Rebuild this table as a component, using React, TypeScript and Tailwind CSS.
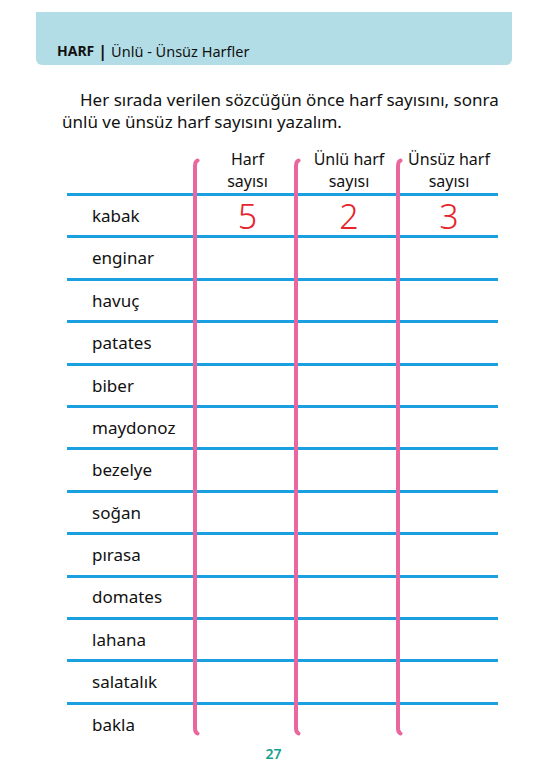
import React from "react";

const words = [
  "kabak",
  "enginar",
  "havuç",
  "patates",
  "biber",
  "maydonoz",
  "bezelye",
  "soğan",
  "pırasa",
  "domates",
  "lahana",
  "salatalık",
  "bakla",
];

// pink column rule, drawn like a marker stroke with slightly curled ends
const PinkRule = ({ className = "" }: { className?: string }) => (
  <svg
    viewBox="0 0 12 578"
    width="12"
    height="578"
    className={className}
    fill="none"
    stroke="#e9669f"
    strokeWidth="4"
    strokeLinecap="round"
  >
    <path d="M6.5 2.5 Q4 3.5 4 8 L4 570 Q4 574.5 6.5 575.5" />
  </svg>
);

export default function App() {
  return (
    <div
      className="w-[553px] h-[780px] bg-white text-[#111] flex flex-col"
      style={{ fontFamily: '"Noto Sans", "Open Sans", sans-serif' }}
    >
      {/* header band */}
      <div className="ml-[36px] mt-[12px] w-[476px] h-[53px] bg-[#b3dde6] rounded-b-[6px] flex items-end pl-[21px] pb-[5px] text-[14px] leading-[18px]">
        <span className="font-bold">HARF</span>
        <span className="font-bold mx-[4px] text-[16px]">|</span>
        <span className="text-[14.5px]">Ünlü - Ünsüz Harfler</span>
      </div>

      {/* instruction */}
      <p className="mt-[24px] pl-[62px] pr-[50px] text-[17px] leading-[22px] indent-[18px]">
        Her sırada verilen sözcüğün önce harf sayısını, sonra ünlü ve ünsüz harf sayısını yazalım.
      </p>

      {/* table */}
      <div className="relative ml-[67px] mt-[15px] w-[431px]">
        <div className="grid grid-cols-[130px_101px_102px_98px] h-[45px] text-[16px] leading-[22px] text-center">
          <div />
          <div className="flex flex-col justify-end pb-[1px]">
            <span>Harf</span>
            <span>sayısı</span>
          </div>
          <div className="flex flex-col justify-end pb-[1px]">
            <span>Ünlü harf</span>
            <span>sayısı</span>
          </div>
          <div className="flex flex-col justify-end pb-[1px]">
            <span>Ünsüz harf</span>
            <span>sayısı</span>
          </div>
        </div>

        {words.map((w, i) => (
          <div
            key={w}
            className="grid grid-cols-[130px_101px_102px_98px] h-[42.4px] border-t-[3px] border-[#1aa0e0] items-center"
          >
            <span className="pl-[25px] text-[17px]">{w}</span>
            {i === 0 ? (
              <>
                <span className="text-center text-[34px] leading-[36px] font-light text-[#e5242c]">5</span>
                <span className="text-center text-[34px] leading-[36px] font-light text-[#e5242c]">2</span>
                <span className="text-center text-[34px] leading-[36px] font-light text-[#e5242c]">3</span>
              </>
            ) : (
              <>
                <span />
                <span />
                <span />
              </>
            )}
          </div>
        ))}

        {/* pink column rules over the grid */}
        <PinkRule className="absolute top-[10px] left-[124px]" />
        <PinkRule className="absolute top-[10px] left-[225px]" />
        <PinkRule className="absolute top-[10px] left-[327px]" />
      </div>

      <div className="mt-0 text-center text-[14px] leading-[20px] font-semibold text-[#17a08e] pr-[6px]">27</div>
    </div>
  );
}
